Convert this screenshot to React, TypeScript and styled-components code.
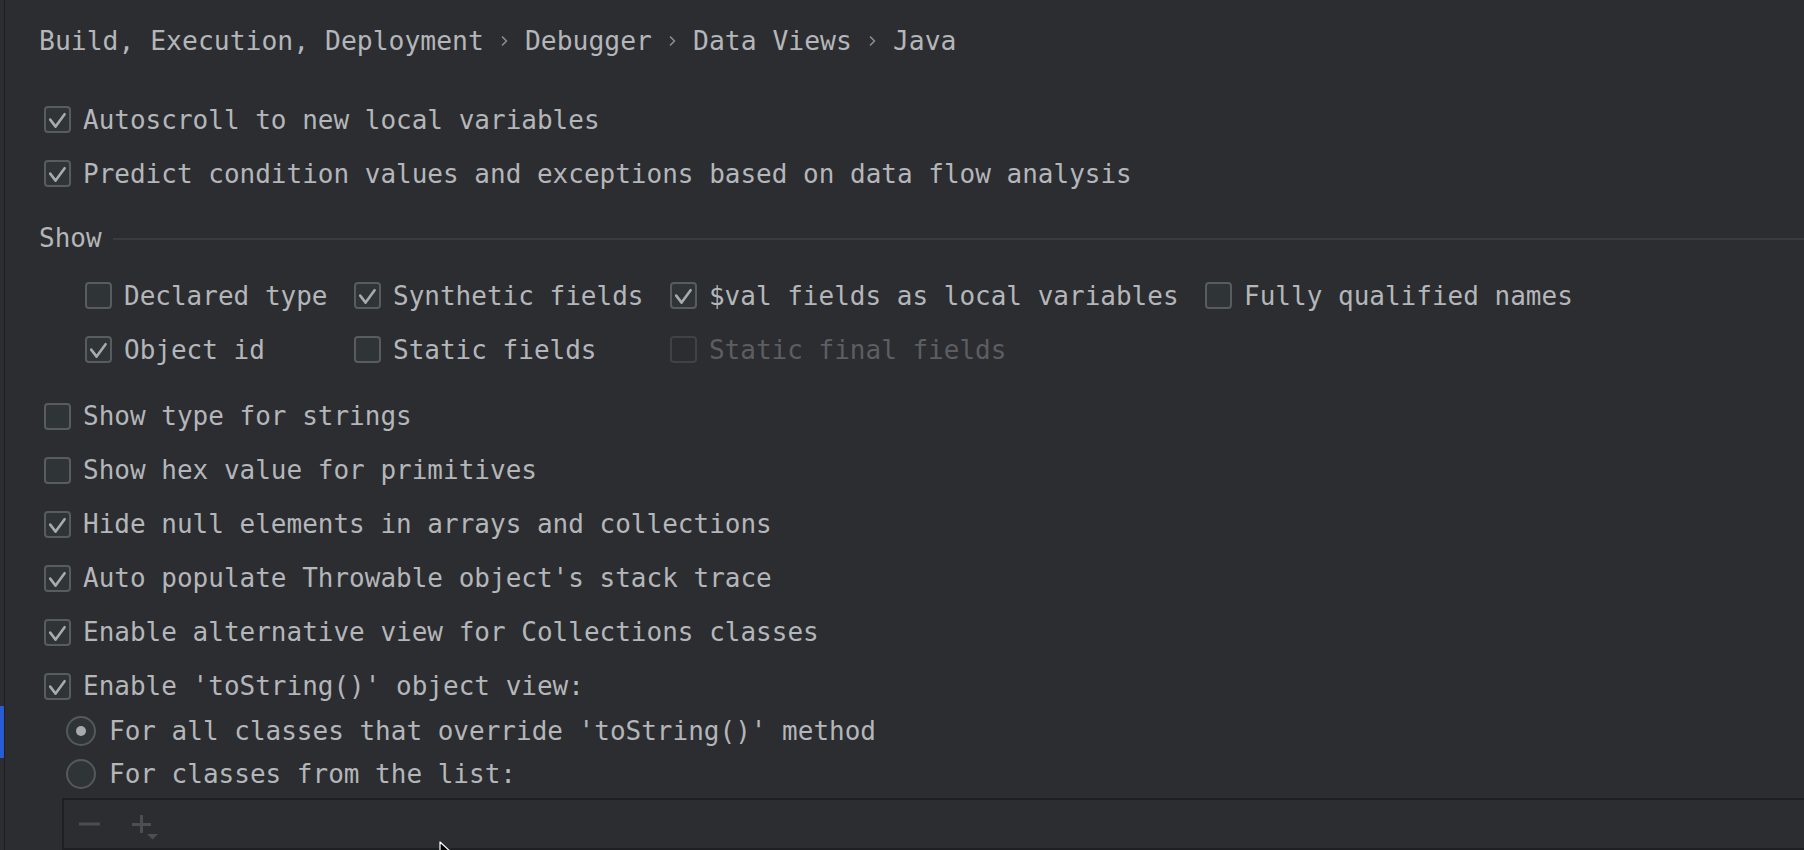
import React from "react";
import styled, { createGlobalStyle } from "styled-components";

const GlobalStyle = createGlobalStyle`
  html, body {
    margin: 0;
    padding: 0;
    background: #2b2d30;
  }
  body {
    overflow: hidden;
  }
`;

const Page = styled.div`
  position: relative;
  display: flex;
  width: 1804px;
  height: 850px;
  overflow: hidden;
  background: #2b2d30;
  color: #b4b6b9;
  font-family: "DejaVu Sans Mono", "Liberation Mono", monospace;
`;

const Gutter = styled.aside`
  flex: none;
  width: 4px;
  padding-top: 706px;
  box-sizing: border-box;
`;

const SelectionMark = styled.div`
  height: 52px;
  background: #2a5bd6;
`;

const Panel = styled.main`
  flex: 1;
  min-width: 0;
  display: flex;
  flex-direction: column;
  border-left: 1px solid #1e1f22;
  padding: 26px 0 0 34px;
  overflow: hidden;
`;

const Breadcrumbs = styled.nav`
  display: flex;
  align-items: center;
  height: 30px;
  margin-bottom: 36.5px;
  font-size: 26.4px;
  line-height: 30px;
  white-space: pre;
`;

const Crumb = styled.span`
  color: #b4b6b9;
`;

const Separator = styled.span`
  display: inline-flex;
  justify-content: center;
  align-items: center;
  width: 41px;
  color: #8d8f93;
`;

const Chevron = () => (
  <svg width="7" height="12" viewBox="0 0 7 12" fill="none">
    <path d="M1.5 2 L5.5 6 L1.5 10" stroke="#8d8f93" strokeWidth="1.6" strokeLinecap="round" strokeLinejoin="round" />
  </svg>
);

const OptionList = styled.div<{ $indent?: number }>`
  display: flex;
  flex-direction: column;
  padding-left: ${(p) => p.$indent ?? 5}px;
`;

const Row = styled.label<{ $disabled?: boolean }>`
  display: flex;
  align-items: center;
  gap: 12px;
  height: 54px;
  font-size: 26px;
  line-height: 30px;
  white-space: pre;
  color: ${(p) => (p.$disabled ? "#5c5e62" : "#b4b6b9")};
`;

const Box = styled.span<{ $disabled?: boolean }>`
  flex: none;
  display: flex;
  align-items: center;
  justify-content: center;
  width: 27px;
  height: 27px;
  box-sizing: border-box;
  border: 2px solid ${(p) => (p.$disabled ? "#404246" : "#585b60")};
  border-radius: 4px;
  background: ${(p) => (p.$disabled ? "#2b2d30" : "#2f3437")};
`;

const CheckMark = () => (
  <svg width="23" height="23" viewBox="0 0 23 23" fill="none">
    <path d="M4.2 11.6 L9.6 18.6 L18.6 6.2" stroke="#a8aaad" strokeWidth="2.6" strokeLinecap="round" strokeLinejoin="round" />
  </svg>
);

type CheckProps = { label: string; checked?: boolean; disabled?: boolean };

const Check = ({ label, checked, disabled }: CheckProps) => (
  <Row $disabled={disabled}>
    <Box $disabled={disabled}>{checked && <CheckMark />}</Box>
    <span>{label}</span>
  </Row>
);

const GroupTitle = styled.div`
  display: flex;
  align-items: center;
  gap: 11px;
  height: 30px;
  padding: 22px 0 16px;
  font-size: 26px;
  line-height: 30px;
  &::after {
    content: "";
    flex: 1;
    height: 2px;
    margin-top: 3px;
    background: #393b3f;
  }
`;

const OptionGrid = styled.div`
  display: grid;
  grid-template-columns: repeat(4, max-content);
  grid-auto-rows: 54px;
  column-gap: 26.5px;
  padding: 0 0 12.5px 46px;
`;

const RadioGroup = styled.div`
  display: flex;
  flex-direction: column;
  margin-top: -3.5px;
  padding-left: 27px;
`;

const RadioRow = styled(Row)`
  height: 43px;
  gap: 13px;
`;

const RadioCircle = styled.span<{ $checked?: boolean }>`
  flex: none;
  display: flex;
  align-items: center;
  justify-content: center;
  width: 30px;
  height: 30px;
  box-sizing: border-box;
  border: 2px solid #55585d;
  border-radius: 50%;
  background: #2f3437;
  &::after {
    content: "";
    display: ${(p) => (p.$checked ? "block" : "none")};
    width: 10px;
    height: 10px;
    border-radius: 50%;
    background: #a8aaad;
  }
`;

const Radio = ({ label, checked }: { label: string; checked?: boolean }) => (
  <RadioRow>
    <RadioCircle $checked={checked} />
    <span>{label}</span>
  </RadioRow>
);

const ListBox = styled.div`
  flex: none;
  height: 220px;
  margin: 2px -20px 0 23px;
  border: 2px solid #1e1f22;
`;

const ListToolbar = styled.div`
  display: flex;
  align-items: center;
  gap: 30px;
  height: 48px;
  padding-left: 15px;
  border-bottom: 2px solid #1e1f22;
`;

const ToolButton = styled.span`
  display: flex;
  align-items: center;
`;

const MinusIcon = () => (
  <svg width="22" height="4" viewBox="0 0 22 4">
    <rect x="0" y="0.5" width="21" height="3" fill="#4b4e53" />
  </svg>
);

const AddIcon = () => (
  <svg width="28" height="26" viewBox="0 0 28 26" style={{ marginTop: 8 }}>
    <rect x="1" y="8" width="19" height="3" fill="#4b4e53" />
    <rect x="9" y="0" width="3" height="18" fill="#4b4e53" />
    <path d="M16 19 L27 19 L21.5 24.5 Z" fill="#4b4e53" />
  </svg>
);

const Cursor = styled.svg`
  position: absolute;
  left: 439px;
  top: 841px;
`;

const crumbs = ["Build, Execution, Deployment", "Debugger", "Data Views", "Java"];

const gridItems: CheckProps[] = [
  { label: "Declared type" },
  { label: "Synthetic fields", checked: true },
  { label: "$val fields as local variables", checked: true },
  { label: "Fully qualified names" },
  { label: "Object id", checked: true },
  { label: "Static fields" },
  { label: "Static final fields", disabled: true },
];

const lowerItems: CheckProps[] = [
  { label: "Show type for strings" },
  { label: "Show hex value for primitives" },
  { label: "Hide null elements in arrays and collections", checked: true },
  { label: "Auto populate Throwable object's stack trace", checked: true },
  { label: "Enable alternative view for Collections classes", checked: true },
  { label: "Enable 'toString()' object view:", checked: true },
];

export default function App() {
  return (
    <>
      <GlobalStyle />
      <Page>
        <Gutter>
          <SelectionMark />
        </Gutter>
        <Panel>
          <Breadcrumbs>
            {crumbs.map((c, i) => (
              <React.Fragment key={c}>
                {i > 0 && (
                  <Separator>
                    <Chevron />
                  </Separator>
                )}
                <Crumb>{c}</Crumb>
              </React.Fragment>
            ))}
          </Breadcrumbs>

          <OptionList>
            <Check label="Autoscroll to new local variables" checked />
            <Check label="Predict condition values and exceptions based on data flow analysis" checked />
          </OptionList>

          <GroupTitle>Show</GroupTitle>

          <OptionGrid>
            {gridItems.map((it) => (
              <Check key={it.label} {...it} />
            ))}
          </OptionGrid>

          <OptionList>
            {lowerItems.map((it) => (
              <Check key={it.label} {...it} />
            ))}
          </OptionList>

          <RadioGroup>
            <Radio label="For all classes that override 'toString()' method" checked />
            <Radio label="For classes from the list:" />
          </RadioGroup>

          <ListBox>
            <ListToolbar>
              <ToolButton>
                <MinusIcon />
              </ToolButton>
              <ToolButton>
                <AddIcon />
              </ToolButton>
            </ListToolbar>
          </ListBox>
        </Panel>
        <Cursor width="14" height="20" viewBox="0 0 14 20">
          <path d="M1 1 L1 17 L5 13 L8 19 L10.5 18 L7.5 12 L13 12 Z" fill="#000" stroke="#fff" strokeWidth="1.2" strokeLinejoin="round" />
        </Cursor>
      </Page>
    </>
  );
}
